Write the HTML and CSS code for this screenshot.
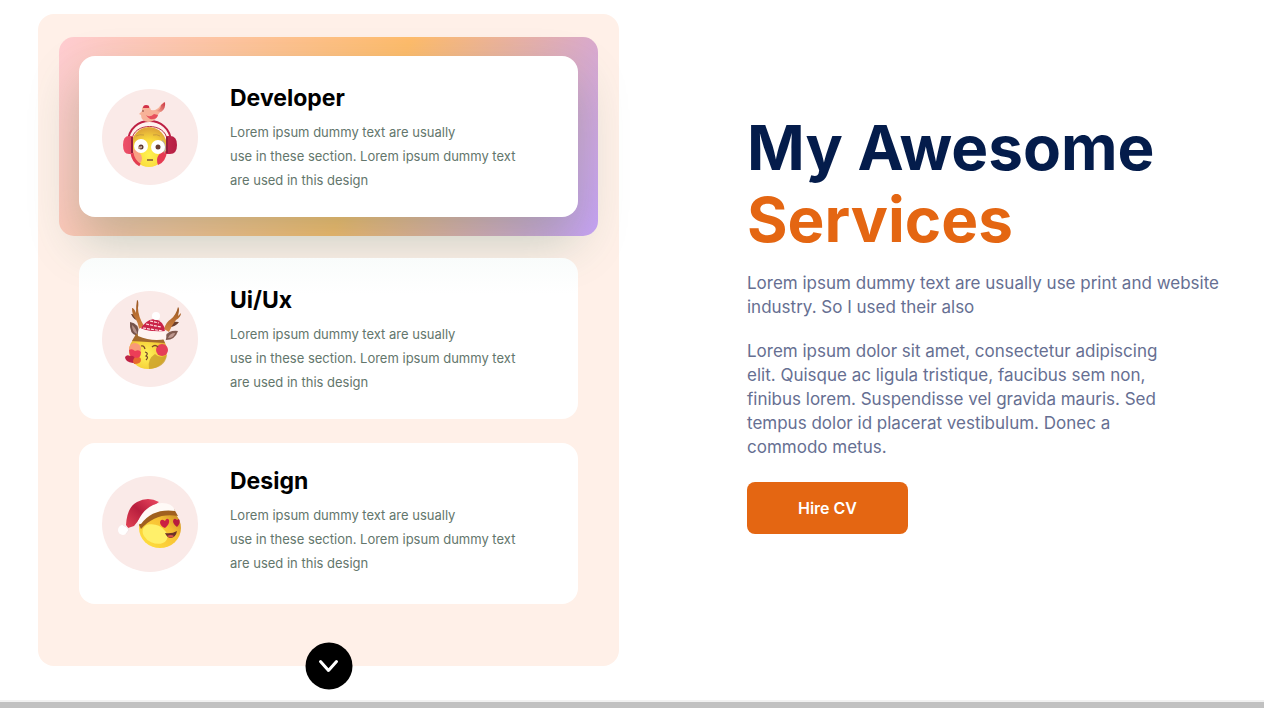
FILE: index.html
```html
<!DOCTYPE html>
<html lang="en">
<head>
<meta charset="utf-8">
<meta name="viewport" content="width=device-width, initial-scale=1">
<title>My Awesome Services</title>
<link rel="stylesheet" href="styles.css">
</head>
<body>
<main class="services">
  <section class="panel" aria-label="Services list">
    <div class="frame">
      <article class="card card-active">
        <div class="avatar">
          <svg viewBox="7 7 96 96" aria-hidden="true">
            <defs>
              <radialGradient id="face" cx="50%" cy="70%" r="65%">
                <stop offset="0" stop-color="#fff24f"/><stop offset=".6" stop-color="#f9d93c"/><stop offset="1" stop-color="#e0a838"/>
              </radialGradient>
              <linearGradient id="cup" x1="0" x2="1"><stop offset="0" stop-color="#ee5068"/><stop offset="1" stop-color="#b51e43"/></linearGradient>
              <linearGradient id="tail" x1="0" y1="1" x2="1" y2="0"><stop offset="0" stop-color="#f6b49a"/><stop offset="1" stop-color="#c93040"/></linearGradient>
            </defs>
            <path d="M33 60C34 32 75 32 76 60" fill="#fff2ee" stroke="#bd2044" stroke-width="2"/>
            <path d="M37 58C38 40 71 40 72 58" fill="none" stroke="#b82c40" stroke-width="1"/>
            <ellipse cx="54" cy="65" rx="18" ry="20" fill="url(#face)"/>
            <path d="M37 67Q46 69 47 76 47 81 43 82 37 76 37 67" fill="#f9a184"/>
            <path d="M37 71Q38 79 45 83" fill="none" stroke="#e33d50" stroke-width="3"/>
            <path d="M72 69C64 69 60 76 63 83Q71 80 72 69" fill="#e63b52"/>
            <path d="M67 57Q74 65 69 72" fill="#b4a49a"/>
            <ellipse cx="46" cy="64" rx="7" ry="7" fill="#fff"/>
            <ellipse cx="63" cy="65" rx="7" ry="7" fill="#fff"/>
            <circle cx="46" cy="65" r="2.5" fill="#5c3932"/><path d="M43 65l4-1v2l-4 1z" fill="#c7a896"/>
            <circle cx="63" cy="65" r="2.5" fill="#693d33"/>
            <path d="M41 54q4-2 8-1M58 53q4-1 7 1" fill="none" stroke="#c99b3c" stroke-width="1"/>
            <path d="M52 78h6" stroke="#815533" stroke-width="1.5"/>
            <path d="M38 54h-4q-6 0-6 9t6 9h4zM71 54h4q7 0 7 9t-7 9h-4z" fill="url(#cup)"/>
            <path d="M37 55v16M72 55v16" stroke="#93203d" stroke-width="2"/>
            <path d="M44 32l3-3q-1-5 4-5 4 0 5 4 6 1 9-4l4-4q1 6-3 9-3 3-4 6-3 5-9 5-7-1-7-7z" fill="#f7b298"/>
            <path d="M60 29q6-1 6-6l4-3q1 7-4 10z" fill="url(#tail)"/>
            <path d="M48 26q0-3 3-3 4 0 3 3z" fill="#d23148"/>
            <path d="M51 33q4 3 8-1l4 1q-1 4-5 4-4 1-7-4" fill="#e7505c"/>
            <circle cx="48" cy="29" r=".8" fill="#76352e"/>
          </svg>
        </div>
        <div class="card-text">
          <h2 class="card-title">Developer</h2>
          <p class="card-desc">Lorem ipsum dummy text are usually<br>use in these section. Lorem ipsum dummy text<br>are used in this design</p>
        </div>
      </article>
    </div>
    <article class="card card-shaded">
      <div class="avatar">
        <svg viewBox="7 6 96 96" aria-hidden="true">
          <defs>
            <linearGradient id="horn" x1="0" y1="0" x2="0" y2="1"><stop offset="0" stop-color="#985622"/><stop offset="1" stop-color="#d88742"/></linearGradient>
            <radialGradient id="face2" cx="45%" cy="60%" r="60%"><stop offset="0" stop-color="#fff35b"/><stop offset=".7" stop-color="#f6d038"/><stop offset="1" stop-color="#d8a134"/></radialGradient>
          </defs>
          <path d="M36 29q5 0 8 4l1 3q-6 0-9-7zM84 37q-6-1-9 1l-3 4q8 1 12-5z" fill="#6b3f2d"/>
          <path d="M42 15q2 0 1 8 0 8 6 18l-5 3q-1-7-4-11-3-3-3-10 2 0 4 5 0-8 1-13z" fill="url(#horn)"/>
          <path d="M83 22q2 1 0 9l3-3q0 4-5 7-4 5-7 12l-5-3q2-7 7-10 5-4 7-12z" fill="url(#horn)"/>
          <path d="M35 37q9 1 9 12l-2 2q-8-2-7-14z" fill="#76534b"/><path d="M37 40q5 4 5 9-5-2-5-9" fill="#b69188"/>
          <path d="M83 46q-9-1-13 5l1 4q9 0 12-9z" fill="#805b50"/><path d="M80 48q-5 0-7 5 6 0 7-5" fill="#be9990"/>
          <ellipse cx="53" cy="66" rx="19" ry="18" fill="url(#face2)"/>
          <path d="M37 56q15 1 33 2l-3-7-26-2z" fill="#a46a2c"/>
          <path d="M54 84q-2-10 6-15 5 5 12 1-2 13-18 14" fill="#c99f2b" opacity=".8"/>
          <circle cx="40" cy="64" r="6" fill="#f99a78"/>
          <path d="M34 65q3-2 6 1 4-2 6 1 0 6-6 9-6-4-6-11" fill="#ec3d57"/>
          <circle cx="67" cy="65" r="6" fill="#e53e58"/>
          <path d="M30 72q2-3 5-1 4-1 5 3 0 4-2 4-8-1-8-6z" fill="#bf2245"/>
          <path d="M38 76q1-5 4-3 4-2 4 2 0 4-7 4z" fill="#e8682f"/>
          <path d="M46 61q3-1 4 3M57 62q3-3 6 0" fill="none" stroke="#7d4827" stroke-width="1.3"/>
          <path d="M50 67q4 1 1 4 3 1 0 4" fill="none" stroke="#71452b" stroke-width="1.2"/>
          <path d="M45 45q5-10 14-11 11 2 11 13z" fill="#ca2348"/>
          <path d="M51 39l15 3M48 43l20 3M55 36l9 2" stroke="#ffe4e4" stroke-width="1.2" stroke-dasharray="3 1"/>
          <path d="M45 43q12 5 25 3 2 3 1 8-14 3-28-3-1-4 2-8z" fill="#fff4f0"/>
          <circle cx="61" cy="31" r="4" fill="#fff"/>
        </svg>
      </div>
      <div class="card-text">
        <h2 class="card-title">Ui/Ux</h2>
        <p class="card-desc">Lorem ipsum dummy text are usually<br>use in these section. Lorem ipsum dummy text<br>are used in this design</p>
      </div>
    </article>
    <article class="card">
      <div class="avatar">
        <svg viewBox="7 8 96 96" aria-hidden="true">
          <defs>
            <linearGradient id="face3" x1="0" y1="1" x2="1" y2="0"><stop offset="0" stop-color="#ffe440"/><stop offset=".6" stop-color="#f8c134"/><stop offset="1" stop-color="#b87822"/></linearGradient>
            <linearGradient id="hat" x1="0" y1="1" x2="1" y2="0"><stop offset="0" stop-color="#e34456"/><stop offset=".5" stop-color="#b81e3d"/><stop offset="1" stop-color="#ed4a62"/></linearGradient>
          </defs>
          <ellipse cx="65" cy="60" rx="21" ry="20" fill="url(#face3)"/>
          <path d="M44 57q12-18 35-16l4 7Q61 44 46 61z" fill="#a0601f"/>
          <ellipse cx="60" cy="66" rx="13" ry="9" transform="rotate(25 60 66)" fill="#fff06a"/>
          <path d="M70 60q-5-2-5-6 1-4 5-1 2-4 4-1 1 4-4 8z" fill="#cc1e42"/>
          <path d="M82 59q-4-3-4-6 1-4 4-1l2-1q2 4-2 8z" fill="#b81b3e"/>
          <path d="M70 65q7 1 12-2-1 6-6 7-4 0-6-5z" fill="#6d3328"/>
          <path d="M72 68q4-2 7 0-3 3-7 0" fill="#d8534c"/>
          <path d="M31 57Q32 39 42 34q11-6 22 0l-13 9-12 15-6 2z" fill="url(#hat)"/>
          <path d="M43 53Q51 36 67 35q11 0 13 8-22-3-34 13-4 0-3-3z" fill="#fffaf7"/>
          <circle cx="28" cy="62" r="5" fill="#fff"/>
          <path d="M28 57q5 2 6 5l-3 4" fill="none" stroke="#f3e5e6" stroke-width="1"/>
        </svg>
      </div>
      <div class="card-text card-text-raised">
        <h2 class="card-title">Design</h2>
        <p class="card-desc">Lorem ipsum dummy text are usually<br>use in these section. Lorem ipsum dummy text<br>are used in this design</p>
      </div>
    </article>
    <button class="more" type="button" aria-label="Show more services">
      <svg viewBox="0 0 24 24" aria-hidden="true"><path d="M4 7l8 9 8-9" fill="none" stroke="#fff" stroke-width="3" stroke-linecap="round" stroke-linejoin="round"/></svg>
    </button>
  </section>
  <section class="intro">
    <h1 class="heading">My Awesome <span class="heading-accent">Services</span></h1>
    <p class="lead">Lorem ipsum dummy text are usually use print and website<br>industry. So I used their also</p>
    <p class="body">Lorem ipsum dolor sit amet, consectetur adipiscing<br>elit. Quisque ac ligula tristique, faucibus sem non,<br>finibus lorem. Suspendisse vel gravida mauris. Sed<br>tempus dolor id placerat vestibulum. Donec a<br>commodo metus.</p>
    <button class="hire" type="button">Hire CV</button>
  </section>
</main>
</body>
</html>
```
FILE: styles.css
```css
* { box-sizing: border-box; }
body {
  margin: 0;
  min-height: 100vh;
  display: flex;
  flex-direction: column;
  background: #fff;
  font-family: Inter, "Open Sans", sans-serif;
  border-bottom: 6px solid #c1c1c1;
}
h1, h2, p { margin: 0; }
.services {
  flex: 1;
  display: grid;
  grid-template-columns: 581fr 478fr;
  column-gap: 128px;
  align-items: start;
  padding: 14px 39px 12px 38px;
  border-bottom: 2px solid #f1f1f1;
}
.panel {
  position: relative;
  display: flex;
  flex-direction: column;
  gap: 22px;
  padding: 23px 21px 62px;
  border-radius: 16px;
  background: #fff0e8;
}
.frame {
  padding: 19px 20px;
  border-radius: 15px;
  background: linear-gradient(112deg, #ffcdd2, #ffbc6b 57%, #c8a2f8);
}
.card {
  display: flex;
  align-items: center;
  gap: 32px;
  min-height: 161px;
  margin: 0 20px;
  padding: 0 23px;
  border-radius: 16px;
  background: #fff;
}
.card + .card { margin-top: 2px; }
.card-active {
  margin: 0;
  box-shadow: 0 24px 50px rgba(40, 110, 90, .27);
}
.card-shaded { background: linear-gradient(#f9fcfb, #fff 36px); z-index: 1; }
.avatar {
  flex: none;
  width: 96px;
  height: 96px;
  border-radius: 50%;
  background: #faeae8;
}
.avatar svg { display: block; width: 100%; height: 100%; }
.card-text { padding-bottom: 2px; }
.card-text-raised { padding-bottom: 10px; }
.card-title {
  margin-bottom: 4px;
  font-size: 23px;
  line-height: 36px;
  font-weight: 700;
  color: #000;
}
.card-desc {
  font-size: 13px;
  line-height: 24px;
  color: #63766c;
  white-space: nowrap;
}
.more {
  position: absolute;
  left: 50%;
  bottom: 0;
  transform: translate(-50%, 50%);
  width: 47px;
  height: 47px;
  padding: 0;
  border: 0;
  border-radius: 50%;
  background: #000;
  display: grid;
  place-items: center;
}
.more svg { width: 24px; height: 24px; }
.intro { padding-top: 98px; color: #666f92; }
.heading {
  font-size: 62px;
  line-height: 72px;
  font-weight: 700;
  color: #041c4b;
}
.heading-accent { display: block; color: #e46612; }
.lead, .body {
  font-size: 17px;
  line-height: 24px;
  white-space: nowrap;
}
.lead { margin-top: 15px; }
.body { margin-top: 20px; }
.hire {
  display: block;
  width: 161px;
  height: 52px;
  margin-top: 23px;
  border: 0;
  border-radius: 8px;
  background: #e46612;
  color: #fff;
  font: 600 16px/24px Inter, "Open Sans", sans-serif;
}
```
